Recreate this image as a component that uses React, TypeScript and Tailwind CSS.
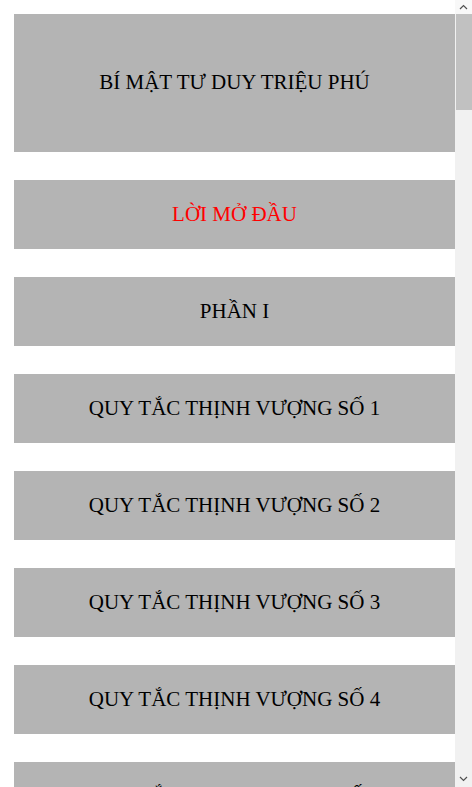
const chapters: { title: string; red?: boolean }[] = [
  { title: "LỜI MỞ ĐẦU", red: true },
  { title: "PHẦN I" },
  ...Array.from({ length: 5 }, (_, i) => ({ title: `QUY TẮC THỊNH VƯỢNG SỐ ${i + 1}` })),
];

function Chevron({ up }: { up?: boolean }) {
  return (
    <svg width="9" height="6" viewBox="0 0 9 6" fill="none">
      <path
        d={up ? "M1 5 L4.5 1.5 L8 5" : "M1 1 L4.5 4.5 L8 1"}
        stroke="#505050"
        strokeWidth="1.2"
      />
    </svg>
  );
}

function Scrollbar() {
  return (
    <div className="w-[17px] h-full bg-[#f1f1f1] flex flex-col shrink-0">
      <div className="h-[14px] flex items-center justify-center bg-[#f8f8f8]">
        <Chevron up />
      </div>
      <div className="h-[96px] ml-[1px] bg-[#c1c1c1]" />
      <div className="flex-1" />
      <div className="h-[17px] flex items-center justify-center">
        <Chevron />
      </div>
    </div>
  );
}

export default function App() {
  return (
    <div className="flex h-[787px] overflow-hidden bg-white">
      <div
        className="flex-1 flex flex-col gap-[28px] pl-[14px] pt-[14px] overflow-hidden"
        style={{ fontFamily: '"Liberation Serif", "Times New Roman", serif' }}
      >
        <div className="h-[138px] shrink-0 bg-[#b4b4b4] flex items-center justify-center text-[21px] text-black">
          BÍ MẬT TƯ DUY TRIỆU PHÚ
        </div>
        {chapters.map((c, i) => (
          <div
            key={i}
            className={
              c.red
                ? "h-[69px] shrink-0 bg-[#b4b4b4] flex items-center justify-center text-[21px] text-[#ff0000]"
                : "h-[69px] shrink-0 bg-[#b4b4b4] flex items-center justify-center text-[21px] text-black"
            }
          >
            {c.title}
          </div>
        ))}
      </div>
      <Scrollbar />
    </div>
  );
}
